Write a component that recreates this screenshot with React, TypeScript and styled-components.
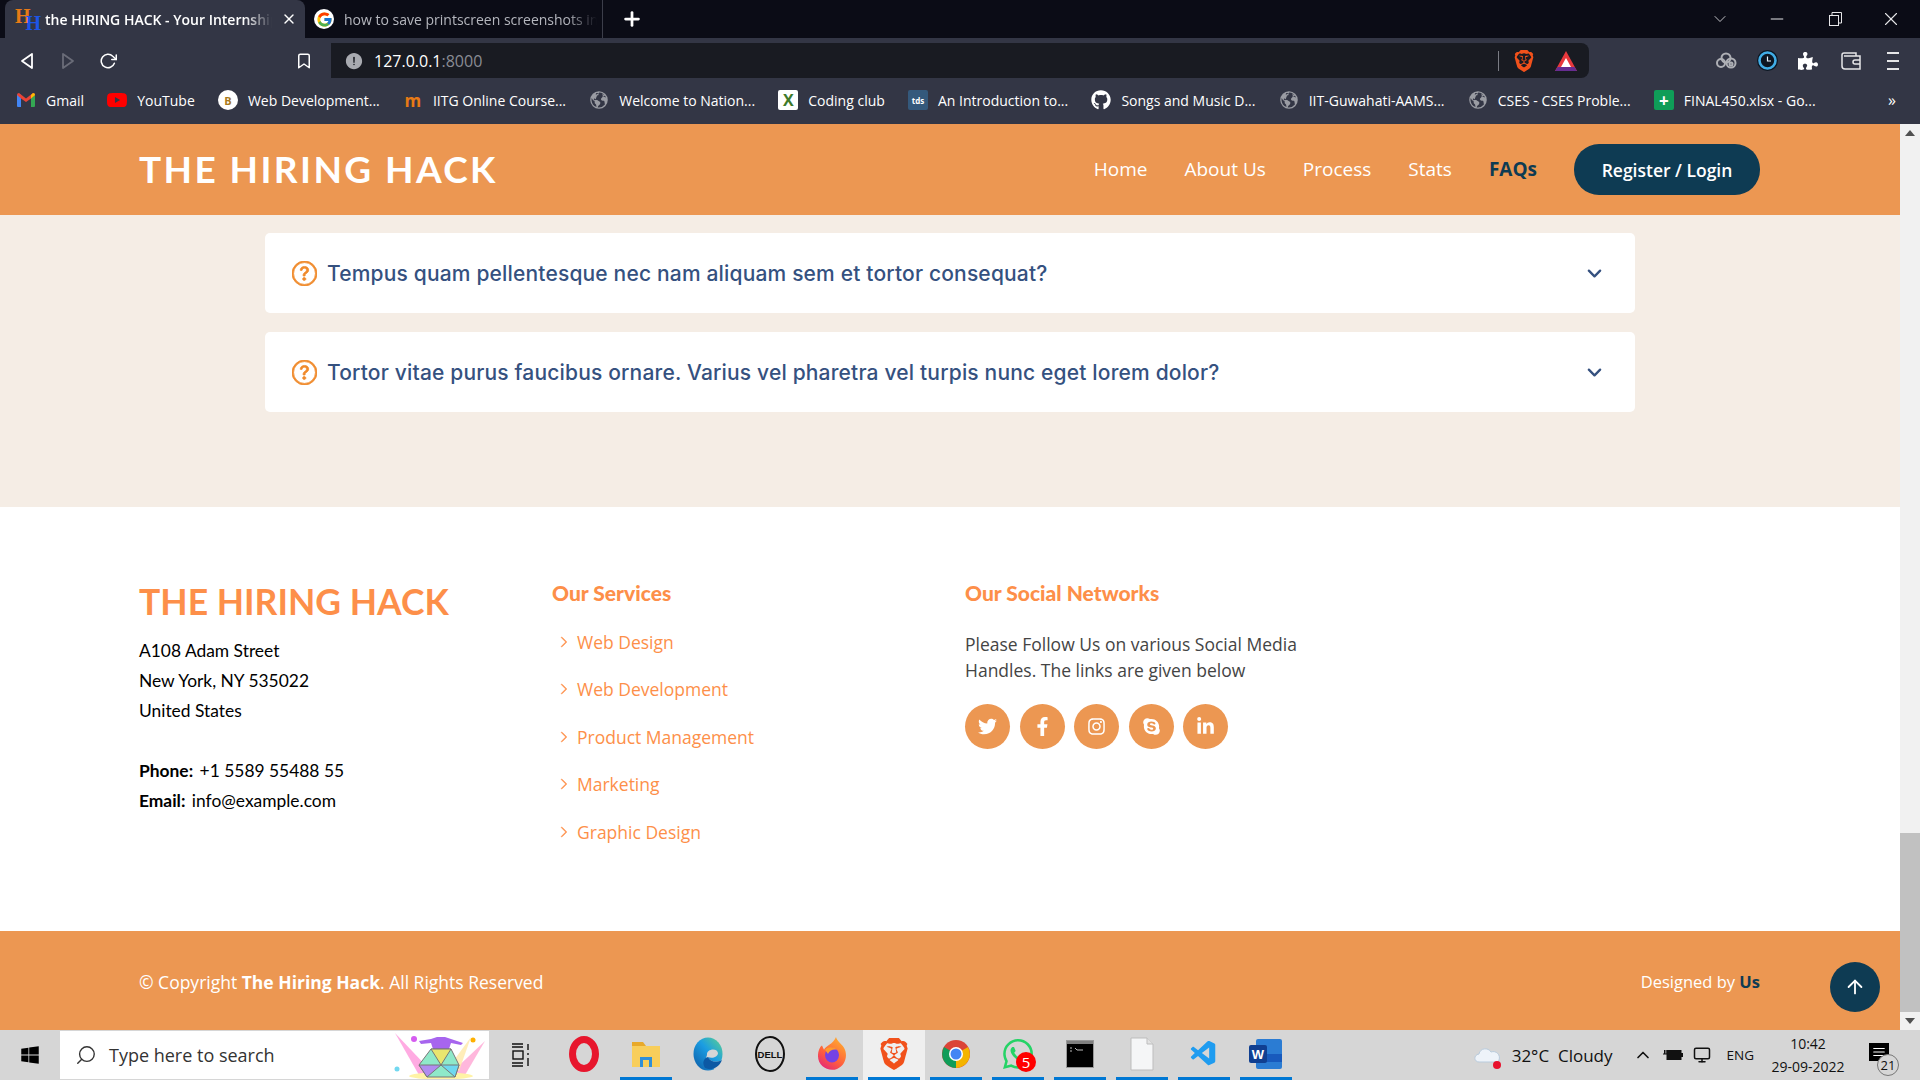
import React from "react";
import styled, { createGlobalStyle } from "styled-components";
import {
  FaTwitter,
  FaFacebookF,
  FaInstagram,
  FaSkype,
  FaLinkedinIn,
  FaGithub,
  FaPuzzlePiece,
  FaWindows,
} from "react-icons/fa";
import { BsQuestionCircle, BsChevronDown, BsChevronRight } from "react-icons/bs";
import { FcGoogle } from "react-icons/fc";
import { SiBrave, SiWhatsapp, SiYoutube } from "react-icons/si";
import { VscVscode } from "react-icons/vsc";
import {
  FiArrowUp,
  FiRotateCw,
  FiBookmark,
  FiSearch,
  FiChevronUp,
  FiMonitor,
  FiMinus,
  FiX,
  FiChevronDown,
  FiPlus,
  FiMenu,
} from "react-icons/fi";
import { IoAlertCircle, IoEarth } from "react-icons/io5";

const ORANGE = "#ec9752";
const NAVY = "#0e3b53";
const HEADING = "#fd8f49";
const CHROME = "#333645";

const GlobalStyle = createGlobalStyle`
  html, body { margin: 0; padding: 0; overflow: hidden; }
  body { font-family: "Open Sans", "Liberation Sans", sans-serif; }
  * { box-sizing: border-box; }
`;

const Screen = styled.div`
  width: 1920px;
  height: 1080px;
  display: flex;
  flex-direction: column;
  overflow: hidden;
`;

/* browser chrome */
const TabStrip = styled.div`
  height: 38px;
  background: #0b0c16;
  display: flex;
  align-items: stretch;
  padding-left: 5px;
  color: #fff;
`;

const ActiveTab = styled.div`
  width: 300px;
  background: ${CHROME};
  border-radius: 8px 8px 0 0;
  display: flex;
  align-items: center;
  padding-left: 10px;
`;

const FaviconHH = styled.div`
  width: 20px;
  height: 24px;
  display: flex;
  font-family: "Liberation Serif", serif;
  font-size: 20px;
  font-weight: 700;
  line-height: 18px;
  letter-spacing: -5px;
`;

const FaviconLetter = styled.span<{ $blue?: boolean }>`
  color: ${(p) => (p.$blue ? "#1c55e8" : "#e87a15")};
  margin-top: ${(p) => (p.$blue ? "7px" : "0")};
`;

const TabTitle = styled.div<{ $dim?: boolean; $width: number }>`
  width: ${(p) => p.$width}px;
  margin-left: 10px;
  font-size: 14px;
  white-space: nowrap;
  overflow: hidden;
  color: ${(p) => (p.$dim ? "#b4b6bd" : "#fff")};
  font-weight: ${(p) => (p.$dim ? 400 : 600)};
  -webkit-mask-image: linear-gradient(to right, #000 88%, transparent);
  mask-image: linear-gradient(to right, #000 88%, transparent);
`;

const TabClose = styled.div`
  margin-left: 9px;
  display: flex;
  font-size: 16px;
`;

const SecondTab = styled.div`
  width: 298px;
  display: flex;
  align-items: center;
  padding-left: 9px;
  border-right: 1px solid #3c3e4a;
`;

const GoogleBadge = styled.div`
  width: 20px;
  height: 20px;
  border-radius: 50%;
  background: #fff;
  display: flex;
  align-items: center;
  justify-content: center;
  font-size: 17px;
`;

const NewTab = styled.div`
  margin-left: 18px;
  display: flex;
  align-items: center;
  font-size: 22px;
`;

const WindowControls = styled.div`
  margin-left: auto;
  display: flex;
  align-items: center;
  padding-right: 18px;
  gap: 37px;
  font-size: 20px;
  color: #e6e6e8;
`;

const RestoreSvg = styled.svg`
  margin: 0 1px 0 5px;
`;

const Toolbar = styled.div`
  height: 40px;
  background: ${CHROME};
  display: flex;
  align-items: flex-end;
  color: #fff;
`;

const NavIcons = styled.div`
  width: 331px;
  height: 35px;
  display: flex;
  align-items: center;
  padding-left: 20px;
  font-size: 20px;
`;

const ToolIcon = styled.div<{ $gap?: number; $dim?: boolean }>`
  display: flex;
  margin-left: ${(p) => p.$gap ?? 0}px;
  color: ${(p) => (p.$dim ? "#6a6c78" : "inherit")};
`;

const AddressBar = styled.div`
  width: 1258px;
  height: 35px;
  background: #191b22;
  border-radius: 0 8px 8px 0;
  display: flex;
  align-items: center;
  padding-left: 13px;
  font-size: 16px;
`;

const Host = styled.span`
  margin-left: 10px;
`;

const Port = styled.span`
  color: #8a8c94;
`;

const AddressEnd = styled.div`
  margin-left: auto;
  display: flex;
  align-items: center;
  padding-right: 12px;
`;

const AddressDivider = styled.div`
  width: 1px;
  height: 20px;
  background: #7a7c84;
  margin-right: 14px;
`;

const BatSlot = styled.div`
  display: flex;
  margin-left: 20px;
`;

const Extensions = styled.div`
  flex: 1;
  height: 35px;
  display: flex;
  align-items: center;
  padding-left: 127px;
  gap: 20px;
  font-size: 20px;
`;

const WalletSvg = styled.svg`
  margin-left: 3px;
`;

const MenuSvg = styled.svg`
  margin-left: 5px;
`;

const BookmarkBar = styled.div`
  height: 46px;
  background: ${CHROME};
  display: flex;
  align-items: center;
  padding: 0 0 2px 16px;
  gap: 23.2px;
  color: #fff;
  font-size: 14px;
`;

const Bookmark = styled.div`
  display: flex;
  align-items: center;
  gap: 10px;
  white-space: nowrap;
`;

const BookmarkIcon = styled.div`
  width: 20px;
  height: 20px;
  display: flex;
  align-items: center;
  justify-content: center;
  font-size: 20px;
`;

const SquareIcon = styled.div<{ $bg: string; $round?: boolean; $fg?: string; $size?: number }>`
  width: 20px;
  height: 20px;
  background: ${(p) => p.$bg};
  color: ${(p) => p.$fg ?? "#fff"};
  border-radius: ${(p) => (p.$round ? "50%" : "2px")};
  display: flex;
  align-items: center;
  justify-content: center;
  font-size: ${(p) => p.$size ?? 8}px;
  font-weight: 700;
`;

const MoreBookmarks = styled.div`
  margin-left: auto;
  padding-right: 24px;
  font-size: 16px;
`;

/* page */
const Viewport = styled.div`
  flex: 1;
  min-height: 0;
  display: flex;
`;

const Page = styled.div`
  flex: 1;
  display: flex;
  flex-direction: column;
  position: relative;
`;

const Header = styled.header`
  height: 91px;
  background: ${ORANGE};
  display: flex;
  align-items: center;
  padding: 0 140px 0 139px;
`;

const Logo = styled.div`
  font-family: Lato, sans-serif;
  font-size: 37px;
  font-weight: 700;
  letter-spacing: 2.4px;
  color: #fff;
  white-space: nowrap;
  margin-bottom: 2px;
`;

const NavMenu = styled.nav`
  margin-left: auto;
  display: flex;
  align-items: center;
  gap: 37px;
`;

const NavLink = styled.a<{ $active?: boolean }>`
  font-size: 19px;
  color: ${(p) => (p.$active ? NAVY : "#fff")};
  font-weight: ${(p) => (p.$active ? 700 : 400)};
  margin-bottom: 2px;
`;

const RegisterButton = styled.a`
  width: 186px;
  height: 51px;
  border-radius: 25px;
  background: ${NAVY};
  color: #fff;
  font-size: 17.5px;
  font-weight: 600;
  display: flex;
  align-items: center;
  justify-content: center;
`;

const FaqSection = styled.section`
  height: 292px;
  background: #f5ede5;
  padding: 18px 265px 0;
  display: flex;
  flex-direction: column;
  gap: 19px;
`;

const FaqCard = styled.div`
  height: 80px;
  background: #fff;
  border-radius: 5px;
  display: flex;
  align-items: center;
  padding: 0 33px 0 27px;
`;

const FaqMark = styled.div`
  display: flex;
  font-size: 25px;
  color: #f08a2b;
`;

const FaqText = styled.div`
  margin-left: 10px;
  font-family: Inter, sans-serif;
  font-size: 21px;
  font-weight: 500;
  letter-spacing: 0.17px;
  color: #35517f;
  white-space: nowrap;
`;

const FaqChevron = styled.div`
  margin-left: auto;
  display: flex;
  font-size: 15px;
  color: #35517f;
`;

const Footer = styled.footer`
  height: 424px;
  background: #fff;
  padding: 74px 140px 0 139px;
  display: grid;
  grid-template-columns: 413px 413px 1fr;
  align-content: start;
`;

const FooterColumn = styled.div`
  display: flex;
  flex-direction: column;
  align-items: flex-start;
`;

const FooterLogo = styled.div`
  font-family: Lato, sans-serif;
  font-size: 35.5px;
  line-height: 42px;
  font-weight: 700;
  color: ${HEADING};
  white-space: nowrap;
  margin-bottom: 13px;
`;

const Address = styled.p<{ $gap?: number }>`
  margin: 0 0 ${(p) => p.$gap ?? 0}px;
  font-family: Lato, sans-serif;
  font-size: 17.4px;
  line-height: 30px;
  color: #000;

  strong {
    font-weight: 700;
    margin-right: 2px;
  }
`;

const ColumnTitle = styled.h4`
  margin: 0 0 13px;
  font-family: Lato, sans-serif;
  font-size: 21px;
  line-height: 24px;
  font-weight: 900;
  color: ${HEADING};
  white-space: nowrap;
`;

const ServiceList = styled.ul`
  list-style: none;
  margin: 0;
  padding: 0 0 0 6px;
  display: flex;
  flex-direction: column;
`;

const ServiceItem = styled.li`
  height: 47.5px;
  display: flex;
  align-items: center;
  font-size: 17.5px;
  color: ${HEADING};
`;

const ServiceArrow = styled.span`
  display: flex;
  width: 19px;
  font-size: 12px;
`;

const SocialText = styled.p`
  margin: 13px 0 0;
  width: 360px;
  font-size: 17.5px;
  line-height: 26px;
  color: #444;
`;

const SocialRow = styled.div`
  margin-top: 21px;
  display: flex;
  gap: 9.5px;
`;

const SocialLink = styled.a`
  width: 45px;
  height: 45px;
  border-radius: 50%;
  background: ${ORANGE};
  color: #fff;
  display: flex;
  align-items: center;
  justify-content: center;
  font-size: 19px;
`;

const BottomBar = styled.div`
  height: 99px;
  background: ${ORANGE};
  display: flex;
  align-items: center;
  justify-content: space-between;
  padding: 3px 140px 0 139px;
  color: #fff;
`;

const Copyright = styled.div`
  font-size: 17.5px;
`;

const Credit = styled.div`
  font-size: 16.5px;
  margin-bottom: 2px;

  strong {
    color: ${NAVY};
  }
`;

const BackToTop = styled.a`
  position: absolute;
  right: 20px;
  bottom: 18px;
  width: 50px;
  height: 50px;
  border-radius: 50%;
  background: ${NAVY};
  color: #fff;
  display: flex;
  align-items: center;
  justify-content: center;
  font-size: 22px;
`;

const Scrollbar = styled.div`
  width: 20px;
  background: #f1f1f1;
  display: flex;
  flex-direction: column;
  align-items: center;
`;

const ScrollArrow = styled.div<{ $down?: boolean }>`
  height: 18px;
  width: 100%;
  display: flex;
  align-items: center;
  justify-content: center;

  &::before {
    content: "";
    border-left: 5px solid transparent;
    border-right: 5px solid transparent;
    ${(p) => (p.$down ? "border-top: 6px solid #505050;" : "border-bottom: 6px solid #505050;")}
  }
`;

const ScrollThumb = styled.div`
  width: 100%;
  height: 179px;
  margin-top: auto;
  background: #c1c1c1;
`;

/* taskbar */
const Taskbar = styled.div`
  height: 50px;
  background: #d6d6d6;
  display: flex;
  align-items: stretch;
  color: #111;
`;

const StartButton = styled.div`
  width: 60px;
  display: flex;
  align-items: center;
  justify-content: center;
  font-size: 20px;
  color: #000;
`;

const SearchBox = styled.div`
  width: 429px;
  margin: 1px 0;
  background: #fff;
  display: flex;
  align-items: center;
  padding-left: 15px;
  font-size: 18px;
  color: #333;
`;

const SearchGlass = styled.div`
  display: flex;
  transform: scaleX(-1);
`;

const SearchText = styled.span`
  margin-left: 12px;
`;

const SearchArt = styled.div`
  margin-left: auto;
  margin-right: 2px;
  display: flex;
`;

const TaskView = styled.div`
  width: 64px;
  display: flex;
  align-items: center;
  justify-content: center;
`;

const AppSlot = styled.div<{ $active?: boolean }>`
  width: 62px;
  padding: 0 5px;
  background: ${(p) => (p.$active ? "#efefef" : "transparent")};
  display: flex;
`;

const AppInner = styled.div<{ $open?: boolean }>`
  flex: 1;
  position: relative;
  display: flex;
  align-items: center;
  justify-content: center;
  border-bottom: 3px solid ${(p) => (p.$open ? "#0078d4" : "transparent")};
  font-size: 30px;
`;

const CountBadge = styled.div`
  position: absolute;
  right: 8px;
  bottom: 5px;
  width: 20px;
  height: 20px;
  border-radius: 50%;
  background: #f00;
  color: #fff;
  font-size: 15px;
  display: flex;
  align-items: center;
  justify-content: center;
`;

const Tray = styled.div`
  margin-left: auto;
  display: flex;
  align-items: center;
  padding-right: 31px;
`;

const Weather = styled.div`
  display: flex;
  align-items: center;
  gap: 9px;
  font-size: 17px;
  margin-right: 20px;
`;

const TrayIcons = styled.div`
  display: flex;
  align-items: center;
  gap: 10px;
  font-size: 20px;
  margin-right: 16px;
`;

const TrayLang = styled.div`
  font-size: 13.5px;
  margin-right: 16px;
`;

const Clock = styled.div`
  width: 76px;
  text-align: center;
  font-size: 14px;
  line-height: 23px;
  margin-right: 23px;
`;

const Notification = styled.div`
  position: relative;
  width: 20px;
  height: 18px;
  background: #000;
  color: #fff;
  display: flex;
  align-items: center;
  justify-content: center;
  font-size: 14px;
  margin-bottom: 6px;
`;

const NotificationCount = styled.div`
  position: absolute;
  left: 8px;
  top: 11px;
  width: 22px;
  height: 22px;
  border-radius: 50%;
  border: 1px solid #777;
  background: #d6d6d6;
  color: #111;
  font-size: 13px;
  display: flex;
  align-items: center;
  justify-content: center;
`;

const BraveLogo = ({ size }: { size: number }) => <SiBrave size={size} color="#f1511b" />;

const GmailMark = () => (
  <svg width="18" height="14" viewBox="0 0 18 14">
    <path d="M0 2 L2 0.5 L4 2 V14 H1 Q0 14 0 13Z" fill="#4285f4" />
    <path d="M14 2 L16 0.5 L18 2 V13 Q18 14 17 14 H14Z" fill="#34a853" />
    <path d="M0 2 Q0 0 2 0 L9 5.5 L16 0 Q18 0 18 2 L14 5.5 L9 9 L4 5.5Z" fill="#ea4335" />
    <path d="M14 2 L16 0 Q18 0 18 2 L14 5.5Z" fill="#fbbc04" />
  </svg>
);

const BatTriangle = () => (
  <svg width="22" height="20" viewBox="0 0 22 20">
    <polygon points="11,0 22,20 0,20" fill="#e8383d" />
    <polygon points="0,20 22,20 19.5,16 2.5,16" fill="#662d91" />
    <polygon points="11,7 16,16 6,16" fill="#fff" />
  </svg>
);

const RestoreIcon = () => (
  <RestoreSvg width="13" height="14" viewBox="0 0 13 14" fill="none" stroke="#e6e6e8">
    <rect x="0.5" y="3.5" width="9" height="10" />
    <path d="M3 3 V0.5 H12.5 V11 H10" />
  </RestoreSvg>
);

const CloudExtension = () => (
  <svg width="21" height="18" viewBox="0 0 21 18" fill="none" stroke="#aeb0b5" strokeWidth="2">
    <circle cx="5" cy="11" r="4" />
    <circle cx="10" cy="6" r="4.5" />
    <circle cx="15" cy="11" r="4.5" />
    <circle cx="15" cy="12" r="1.5" />
  </svg>
);

const ClockExtension = () => (
  <svg width="21" height="21" viewBox="0 0 21 21">
    <circle cx="10.5" cy="10.5" r="10.5" fill="#0c1622" />
    <circle cx="10.5" cy="10.5" r="8" fill="none" stroke="#41ade6" strokeWidth="2.6" />
    <path d="M10.5 6.5 V11 H14" fill="none" stroke="#e8f4fb" strokeWidth="1.2" />
  </svg>
);

const WalletIcon = () => (
  <WalletSvg width="20" height="18" viewBox="0 0 20 18" fill="none" stroke="#e6e6e8" strokeWidth="1.5">
    <path d="M3 1 H15 V4" />
    <path d="M1 3 Q1 1 3 1 M1 3 V14 Q1 17 4 17 H19 V4 H3" />
    <path d="M19 8 H14 Q12 8 12 10 Q12 12 14 12 H19" />
  </WalletSvg>
);

const MenuLines = () => (
  <MenuSvg width="14" height="20" viewBox="0 0 14 20" stroke="#e6e6e8" strokeWidth="2">
    <path d="M1 2 H13 M1 10 H13 M1 18 H13" />
  </MenuSvg>
);

const TaskViewIcon = () => (
  <svg width="20" height="24" viewBox="0 0 20 24" fill="none" stroke="#111" strokeWidth="1.4">
    <path d="M1 1 H12 M1 4 H12 M1 20 H12 M1 23 H12" />
    <rect x="2" y="8" width="10" height="8" />
    <path d="M17 1 V7 M17 10 V12 M17 15 V23" />
  </svg>
);

const ColorChrome = () => (
  <svg width="30" height="30" viewBox="0 0 30 30">
    <circle cx="15" cy="15" r="14" fill="#db4437" />
    <path d="M15 15 L27 8 A14 14 0 0 1 15 29 Z" fill="#f4b400" />
    <path d="M15 15 L15 29 A14 14 0 0 1 3 8 Z" fill="#0f9d58" />
    <circle cx="15" cy="15" r="7" fill="#fff" />
    <circle cx="15" cy="15" r="5.5" fill="#4285f4" />
  </svg>
);

const Edge = () => (
  <svg width="30" height="34" viewBox="0 0 30 34">
    <defs>
      <linearGradient id="edgeFill" x1="0" y1="1" x2="1" y2="0">
        <stop offset="0" stopColor="#0c59a4" />
        <stop offset="0.55" stopColor="#1b9de2" />
        <stop offset="1" stopColor="#5fd38c" />
      </linearGradient>
    </defs>
    <ellipse cx="15" cy="17" rx="14.5" ry="16.5" fill="url(#edgeFill)" />
    <path d="M14 18 C13 12 24 10 25 16 C25 20 19 22 15 20 C17 25 24 26 29 23 L29 28 L22 32 C14 28 12 22 14 18Z" fill="#d6d6d6" />
    <path d="M15 20 C17 25 24 26 29 23 C26 31 18 34 12 31 C9 26 10 22 15 20Z" fill="#0c59a4" />
  </svg>
);

const Dell = () => (
  <svg width="30" height="36" viewBox="0 0 30 36">
    <ellipse cx="15" cy="18" rx="14" ry="17" fill="none" stroke="#111" strokeWidth="2" />
    <text x="15" y="21.5" textAnchor="middle" fontSize="9.5" fontWeight="700" fontFamily="Liberation Sans" fill="#111">
      DELL
    </text>
  </svg>
);

const Firefox = () => (
  <svg width="30" height="34" viewBox="0 0 30 32" preserveAspectRatio="none">
    <defs>
      <linearGradient id="foxFill" x1="0.8" y1="0" x2="0.2" y2="1">
        <stop offset="0" stopColor="#ffb02e" />
        <stop offset="0.6" stopColor="#ff5f3d" />
        <stop offset="1" stopColor="#e3267b" />
      </linearGradient>
    </defs>
    <path d="M19 0 C20 4 24 6 27 10 C31 16 29 27 20 30 C11 33 1 27 1 18 C1 13 3 9 5 8 L7 12 C9 8 16 7 19 0Z" fill="url(#foxFill)" />
    <circle cx="15" cy="17" r="7" fill="#7542e5" />
    <path d="M8 12 C11 9 17 9 20 12 C16 11 12 13 11 16Z" fill="#ff9a2e" />
  </svg>
);

const Opera = () => (
  <svg width="30" height="36" viewBox="0 0 30 36">
    <ellipse cx="15" cy="18" rx="11.5" ry="14.5" fill="none" stroke="#e7162d" strokeWidth="7" />
  </svg>
);

const Folder = () => (
  <svg width="32" height="30" viewBox="0 0 32 30">
    <path d="M2 3 H13 L16 7 H2Z" fill="#e8a92a" />
    <rect x="2" y="7" width="28" height="21" fill="#f8ce5b" />
    <rect x="10" y="18" width="12" height="10" fill="#2f8fd8" />
    <rect x="13" y="21" width="6" height="7" fill="#f8ce5b" />
  </svg>
);

const Terminal = () => (
  <svg width="28" height="28" viewBox="0 0 28 28">
    <rect x="0.5" y="0.5" width="27" height="27" fill="#000" stroke="#999" />
    <rect x="1" y="1" width="26" height="3" fill="#7f7f7f" />
    <path d="M4 8 H6 M4 11 H6 M9 8 L11 10 H17" stroke="#bbb" strokeWidth="1" fill="none" />
  </svg>
);

const BlankFile = () => (
  <svg width="24" height="34" viewBox="0 0 24 34">
    <path d="M1 1 H17 L23 7 V33 H1Z" fill="#f5f6f7" stroke="#bdbdbd" />
    <path d="M17 1 V7 H23" fill="#e2e2e2" stroke="#bdbdbd" />
  </svg>
);

const WordIcon = () => (
  <svg width="34" height="32" viewBox="0 0 34 32">
    <rect x="7" y="1" width="26" height="30" rx="2" fill="#2b7cd3" />
    <rect x="7" y="16" width="26" height="8" fill="#185abd" />
    <rect x="0" y="7" width="18" height="18" rx="2" fill="#103f91" />
    <text x="9" y="21" textAnchor="middle" fontSize="13" fontWeight="700" fontFamily="Liberation Sans" fill="#fff">
      W
    </text>
  </svg>
);

const CrystalArt = () => (
  <svg width="94" height="48" viewBox="0 0 94 48">
    <polygon points="2,2 38,40 26,44" fill="#ff8fd8" opacity="0.75" />
    <polygon points="92,10 58,42 72,44" fill="#ff9fd0" opacity="0.75" />
    <polygon points="78,6 56,36 66,40" fill="#ffe9a8" opacity="0.8" />
    <ellipse cx="48" cy="45" rx="32" ry="3.5" fill="#fff3a6" />
    <path d="M26 10 L38 8 L44 6 H52 L58 8 L70 12 L68 14 L58 12 L56 18 H40 L38 12 L28 13Z" fill="#a765ee" />
    <polygon points="38,18 58,18 66,34 62,46 34,46 26,34" fill="#8fe9c9" stroke="#777" strokeWidth="1" />
    <polygon points="38,18 58,18 48,34" fill="#e9e56f" stroke="#777" strokeWidth="1" />
    <polygon points="26,34 48,34 34,46" fill="#b08cf0" stroke="#777" strokeWidth="1" />
    <polygon points="66,34 48,34 62,46" fill="#6fd8f0" stroke="#777" strokeWidth="1" />
    <circle cx="21" cy="8" r="3" fill="#d55cf0" />
    <circle cx="80" cy="9" r="2.5" fill="#ffb000" />
    <circle cx="4" cy="38" r="2.5" fill="#72d8f0" />
  </svg>
);

const Cloud = () => (
  <svg width="30" height="30" viewBox="0 0 30 30">
    <path d="M6 22 C1 22 0 15 6 14 C7 8 15 7 18 12 C23 10 28 15 26 20 L25 22Z" fill="#eef3f9" stroke="#b9cbdc" />
    <circle cx="24" cy="25" r="4" fill="#e8112d" />
  </svg>
);

const Battery = () => (
  <svg width="20" height="14" viewBox="0 0 20 14">
    <rect x="4" y="2.5" width="14" height="9" fill="#111" stroke="#111" />
    <rect x="18" y="5" width="2" height="4" fill="#111" />
    <path d="M0 6 H4 M1.5 2 V6 M3 2 V6" stroke="#111" />
  </svg>
);

const bookmarks = [
  { label: "Gmail", icon: <GmailMark /> },
  { label: "YouTube", icon: <SiYoutube size={20} color="#f00" /> },
  { label: "Web Development...", icon: <SquareIcon $bg="#fff" $round $fg="#a97a1a" $size={11}>B</SquareIcon> },
  { label: "IITG Online Course...", icon: <SquareIcon $bg="transparent" $fg="#e87a15" $size={17}>m</SquareIcon> },
  { label: "Welcome to Nation...", icon: <IoEarth color="#9a9ca3" /> },
  { label: "Coding club", icon: <SquareIcon $bg="#fff" $fg="#3e7a2a" $size={16}>X</SquareIcon> },
  { label: "An Introduction to...", icon: <SquareIcon $bg="#34597c">tds</SquareIcon> },
  { label: "Songs and Music D...", icon: <FaGithub color="#fff" /> },
  { label: "IIT-Guwahati-AAMS...", icon: <IoEarth color="#9a9ca3" /> },
  { label: "CSES - CSES Proble...", icon: <IoEarth color="#9a9ca3" /> },
  { label: "FINAL450.xlsx - Go...", icon: <SquareIcon $bg="#0f9d58" $size={17}>+</SquareIcon> },
];

const questions = [
  "Tempus quam pellentesque nec nam aliquam sem et tortor consequat?",
  "Tortor vitae purus faucibus ornare. Varius vel pharetra vel turpis nunc eget lorem dolor?",
];

const services = ["Web Design", "Web Development", "Product Management", "Marketing", "Graphic Design"];

const App: React.FC = () => {
  return (
    <Screen>
      <GlobalStyle />

      <TabStrip>
        <ActiveTab>
          <FaviconHH>
            <FaviconLetter>H</FaviconLetter>
            <FaviconLetter $blue>H</FaviconLetter>
          </FaviconHH>
          <TabTitle $width={227}>the HIRING HACK - Your Internship Partner</TabTitle>
          <TabClose>
            <FiX />
          </TabClose>
        </ActiveTab>
        <SecondTab>
          <GoogleBadge>
            <FcGoogle />
          </GoogleBadge>
          <TabTitle $dim $width={253}>
            how to save printscreen screenshots in windows 10
          </TabTitle>
        </SecondTab>
        <NewTab>
          <FiPlus strokeWidth={3} />
        </NewTab>
        <WindowControls>
          <FiChevronDown strokeWidth={1} />
          <FiMinus strokeWidth={1.2} />
          <RestoreIcon />
          <FiX strokeWidth={1.2} size={22} />
        </WindowControls>
      </TabStrip>

      <Toolbar>
        <NavIcons>
          <ToolIcon>
            <svg width="14" height="18" viewBox="0 0 14 18">
              <path d="M12 2 L2 9 L12 16Z" fill="none" stroke="#fff" strokeWidth="1.8" strokeLinejoin="round" />
            </svg>
          </ToolIcon>
          <ToolIcon $gap={27} $dim>
            <svg width="14" height="18" viewBox="0 0 14 18">
              <path d="M2 2 L12 9 L2 16Z" fill="none" stroke="#6a6c78" strokeWidth="1.8" strokeLinejoin="round" />
            </svg>
          </ToolIcon>
          <ToolIcon $gap={24}>
            <FiRotateCw size={18} />
          </ToolIcon>
          <ToolIcon $gap={178}>
            <FiBookmark size={18} />
          </ToolIcon>
        </NavIcons>
        <AddressBar>
          <IoAlertCircle size={20} color="#a8aab0" />
          <Host>
            127.0.0.1<Port>:8000</Port>
          </Host>
          <AddressEnd>
            <AddressDivider />
            <BraveLogo size={22} />
            <BatSlot>
              <BatTriangle />
            </BatSlot>
          </AddressEnd>
        </AddressBar>
        <Extensions>
          <CloudExtension />
          <ClockExtension />
          <FaPuzzlePiece />
          <WalletIcon />
          <MenuLines />
        </Extensions>
      </Toolbar>

      <BookmarkBar>
        {bookmarks.map((b) => (
          <Bookmark key={b.label}>
            <BookmarkIcon>{b.icon}</BookmarkIcon>
            {b.label}
          </Bookmark>
        ))}
        <MoreBookmarks>»</MoreBookmarks>
      </BookmarkBar>

      <Viewport>
        <Page>
          <Header>
            <Logo>THE HIRING HACK</Logo>
            <NavMenu>
              <NavLink>Home</NavLink>
              <NavLink>About Us</NavLink>
              <NavLink>Process</NavLink>
              <NavLink>Stats</NavLink>
              <NavLink $active>FAQs</NavLink>
              <RegisterButton>Register / Login</RegisterButton>
            </NavMenu>
          </Header>

          <FaqSection>
            {questions.map((q) => (
              <FaqCard key={q}>
                <FaqMark>
                  <BsQuestionCircle strokeWidth={0.5} />
                </FaqMark>
                <FaqText>{q}</FaqText>
                <FaqChevron>
                  <BsChevronDown strokeWidth={1.5} />
                </FaqChevron>
              </FaqCard>
            ))}
          </FaqSection>

          <Footer>
            <FooterColumn>
              <FooterLogo>THE HIRING HACK</FooterLogo>
              <Address $gap={30}>
                A108 Adam Street
                <br />
                New York, NY 535022
                <br />
                United States
              </Address>
              <Address>
                <strong>Phone:</strong> +1 5589 55488 55
                <br />
                <strong>Email:</strong> info@example.com
              </Address>
            </FooterColumn>

            <FooterColumn>
              <ColumnTitle>Our Services</ColumnTitle>
              <ServiceList>
                {services.map((s) => (
                  <ServiceItem key={s}>
                    <ServiceArrow>
                      <BsChevronRight strokeWidth={1} />
                    </ServiceArrow>
                    {s}
                  </ServiceItem>
                ))}
              </ServiceList>
            </FooterColumn>

            <FooterColumn>
              <ColumnTitle>Our Social Networks</ColumnTitle>
              <SocialText>Please Follow Us on various Social Media Handles. The links are given below</SocialText>
              <SocialRow>
                <SocialLink>
                  <FaTwitter />
                </SocialLink>
                <SocialLink>
                  <FaFacebookF />
                </SocialLink>
                <SocialLink>
                  <FaInstagram />
                </SocialLink>
                <SocialLink>
                  <FaSkype />
                </SocialLink>
                <SocialLink>
                  <FaLinkedinIn />
                </SocialLink>
              </SocialRow>
            </FooterColumn>
          </Footer>

          <BottomBar>
            <Copyright>
              © Copyright <strong>The Hiring Hack</strong>. All Rights Reserved
            </Copyright>
            <Credit>
              Designed by <strong>Us</strong>
            </Credit>
          </BottomBar>

          <BackToTop>
            <FiArrowUp />
          </BackToTop>
        </Page>

        <Scrollbar>
          <ScrollArrow />
          <ScrollThumb />
          <ScrollArrow $down />
        </Scrollbar>
      </Viewport>

      <Taskbar>
        <StartButton>
          <FaWindows />
        </StartButton>
        <SearchBox>
          <SearchGlass>
            <FiSearch size={22} strokeWidth={1.5} />
          </SearchGlass>
          <SearchText>Type here to search</SearchText>
          <SearchArt>
            <CrystalArt />
          </SearchArt>
        </SearchBox>
        <TaskView>
          <TaskViewIcon />
        </TaskView>
        <AppSlot>
          <AppInner>
            <Opera />
          </AppInner>
        </AppSlot>
        <AppSlot>
          <AppInner $open>
            <Folder />
          </AppInner>
        </AppSlot>
        <AppSlot>
          <AppInner>
            <Edge />
          </AppInner>
        </AppSlot>
        <AppSlot>
          <AppInner>
            <Dell />
          </AppInner>
        </AppSlot>
        <AppSlot>
          <AppInner $open>
            <Firefox />
          </AppInner>
        </AppSlot>
        <AppSlot $active>
          <AppInner $open>
            <BraveLogo size={32} />
          </AppInner>
        </AppSlot>
        <AppSlot>
          <AppInner $open>
            <ColorChrome />
          </AppInner>
        </AppSlot>
        <AppSlot>
          <AppInner $open>
            <SiWhatsapp size={30} color="#25d366" />
            <CountBadge>5</CountBadge>
          </AppInner>
        </AppSlot>
        <AppSlot>
          <AppInner $open>
            <Terminal />
          </AppInner>
        </AppSlot>
        <AppSlot>
          <AppInner $open>
            <BlankFile />
          </AppInner>
        </AppSlot>
        <AppSlot>
          <AppInner $open>
            <VscVscode color="#1f9cf0" />
          </AppInner>
        </AppSlot>
        <AppSlot>
          <AppInner $open>
            <WordIcon />
          </AppInner>
        </AppSlot>

        <Tray>
          <Weather>
            <Cloud />
            <span>32°C&nbsp; Cloudy</span>
          </Weather>
          <TrayIcons>
            <FiChevronUp />
            <Battery />
            <FiMonitor size={18} />
          </TrayIcons>
          <TrayLang>ENG</TrayLang>
          <Clock>
            10:42
            <br />
            29-09-2022
          </Clock>
          <Notification>
            <FiMenu />
            <NotificationCount>21</NotificationCount>
          </Notification>
        </Tray>
      </Taskbar>
    </Screen>
  );
};

export default App;
